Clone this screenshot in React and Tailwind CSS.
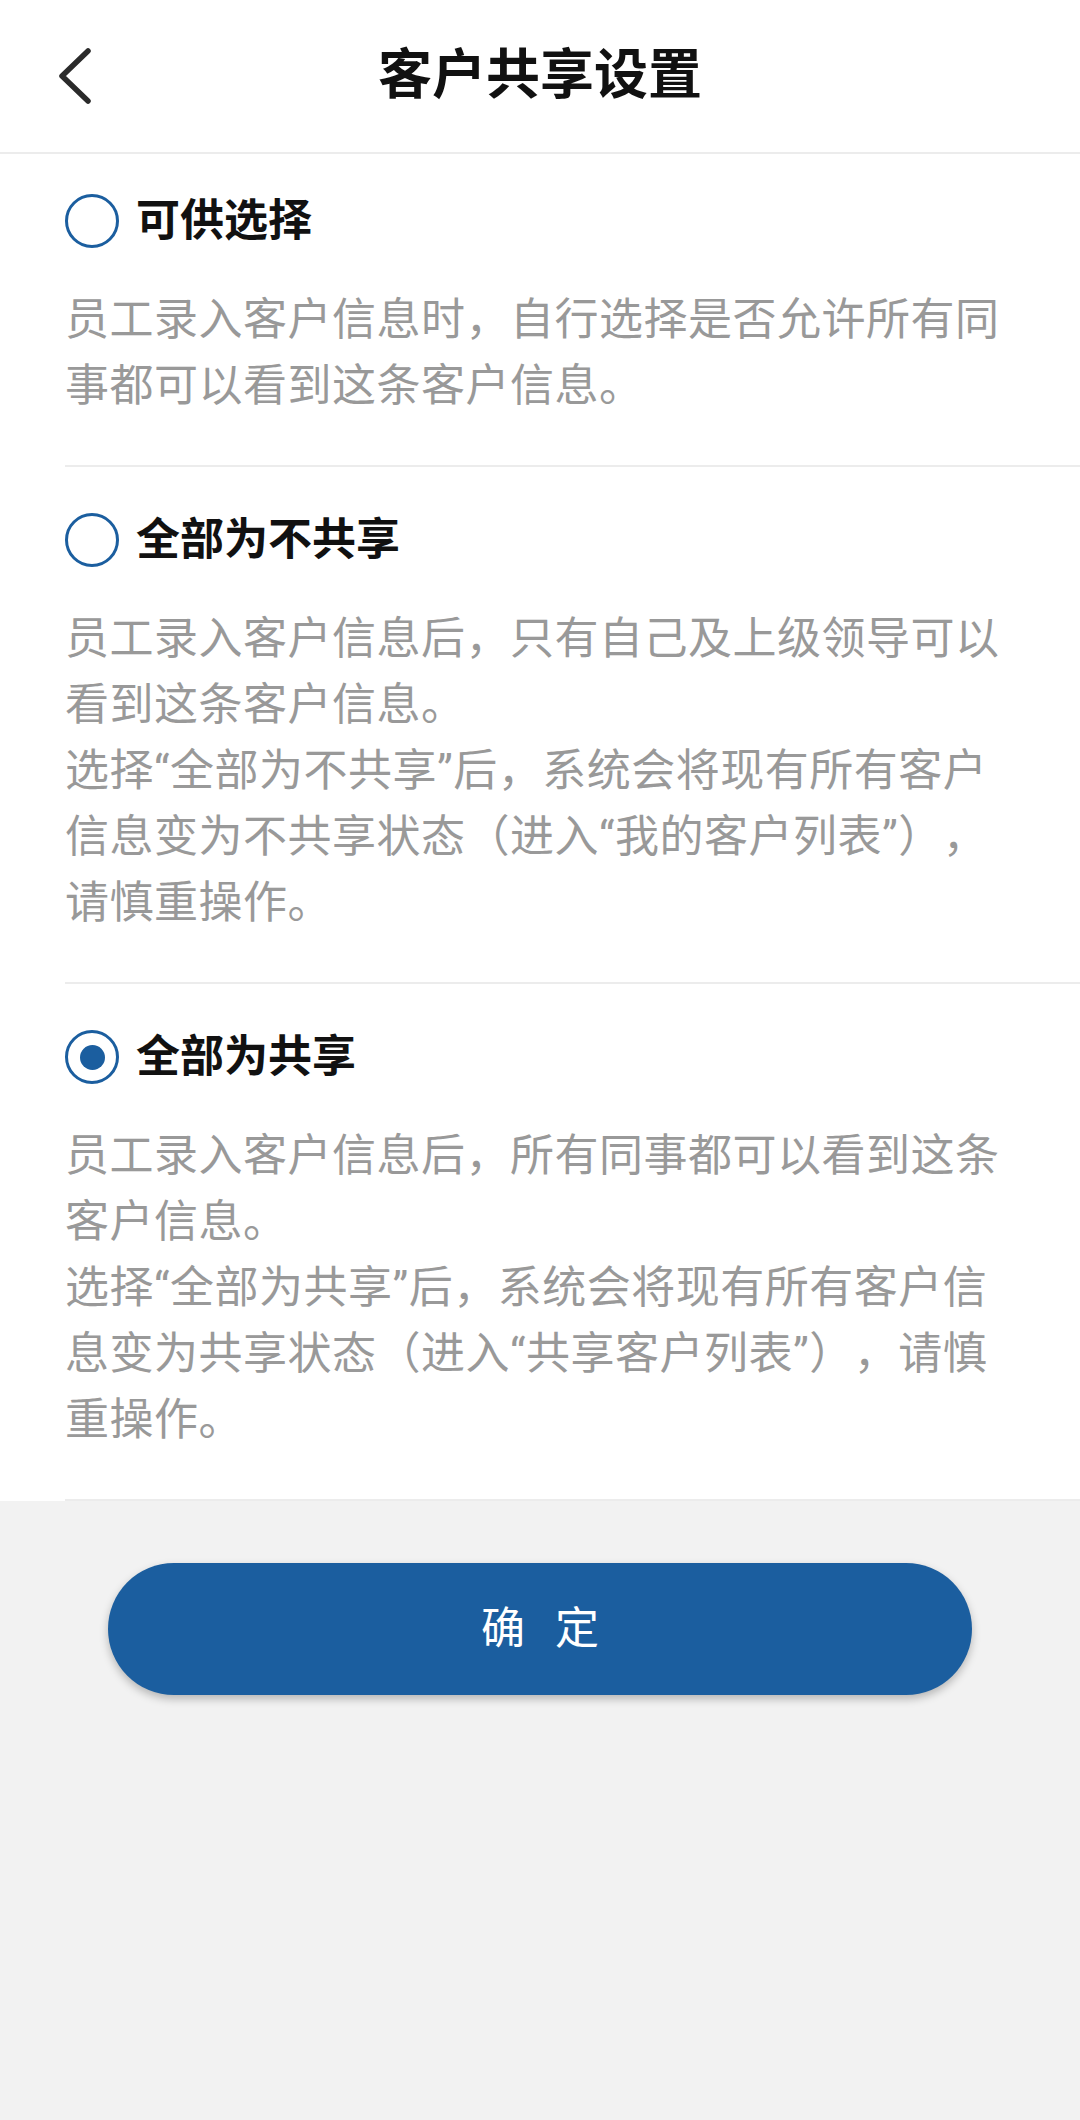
import React, { useState } from "react";

const options = [
  {
    key: "optional",
    title: "可供选择",
    desc: ["员工录入客户信息时，自行选择是否允许所有同事都可以看到这条客户信息。"],
  },
  {
    key: "private",
    title: "全部为不共享",
    desc: [
      "员工录入客户信息后，只有自己及上级领导可以看到这条客户信息。",
      "选择“全部为不共享”后，系统会将现有所有客户信息变为不共享状态（进入“我的客户列表”），请慎重操作。",
    ],
  },
  {
    key: "shared",
    title: "全部为共享",
    desc: [
      "员工录入客户信息后，所有同事都可以看到这条客户信息。",
      "选择“全部为共享”后，系统会将现有所有客户信息变为共享状态（进入“共享客户列表”），请慎重操作。",
    ],
  },
];

const Radio = ({ checked }) => (
  <div className="w-[54px] h-[54px] rounded-full border-[3px] border-[#1b5e9f] flex items-center justify-center shrink-0">
    {checked && <div className="w-[25px] h-[25px] rounded-full bg-[#1b5e9f]"></div>}
  </div>
);

export default function App() {
  const [selected, setSelected] = useState("shared");

  return (
    <div className="min-h-[2120px] bg-[#f2f2f2] font-['Roboto','Noto_Sans_CJK_SC',sans-serif] [text-spacing-trim:space-all]">
      {/* Header */}
      <div className="h-[154px] bg-white border-b-2 border-[#ececec] grid grid-cols-[1fr_auto_1fr] items-center">
        <div className="pl-[56px] flex items-center">
          <svg width="40" height="56" viewBox="0 0 40 56" fill="none">
            <path d="M32 3 L6 28 L32 53" stroke="#2b2b2b" strokeWidth="5.5" strokeLinecap="round" strokeLinejoin="round" />
          </svg>
        </div>
        <h1 className="text-[54px] font-bold text-[#111] leading-none">客户共享设置</h1>
        <div></div>
      </div>

      {/* Options */}
      <div className="bg-white pl-[65px]">
        {options.map((opt, i) => (
          <div
            key={opt.key}
            onClick={() => setSelected(opt.key)}
            className={`border-b-2 border-[#ececec] pb-[46px] ${i === 0 ? "pt-[40px]" : "pt-[46px]"}`}
          >
            <div className="flex items-center gap-[17px] h-[54px]">
              <Radio checked={selected === opt.key} />
              <p className="text-[44px] font-bold text-[#111] leading-none">{opt.title}</p>
            </div>
            <div className="mt-[39px] pr-[70px] text-[44px] leading-[66px] tracking-[0.5px] text-[#999]">
              {opt.desc.map((line, j) => (
                <p key={j}>{line}</p>
              ))}
            </div>
          </div>
        ))}
      </div>

      {/* Confirm button */}
      <div className="px-[108px] pt-[62px]">
        <button className="w-full h-[132px] rounded-full bg-[#1b5e9f] text-white text-[44px] flex items-center justify-center gap-[30px] shadow-[0_4px_8px_rgba(0,0,0,0.25)]">
          <span>确</span>
          <span>定</span>
        </button>
      </div>
    </div>
  );
}
